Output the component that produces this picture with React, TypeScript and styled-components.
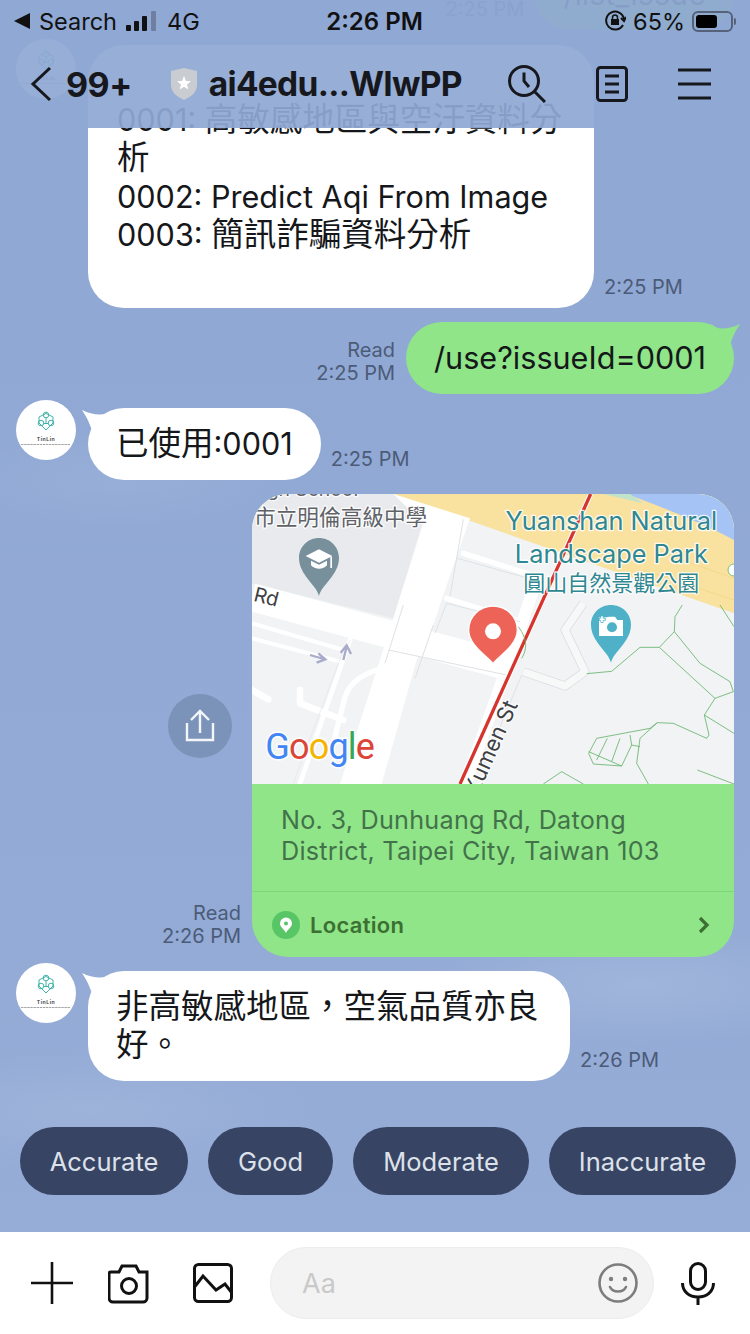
import React from "react";
import styled, { createGlobalStyle } from "styled-components";

const SANS = `Inter, "Noto Sans CJK TC", sans-serif`;

const Global = createGlobalStyle`
  html, body { margin: 0; padding: 0; }
  body { font-family: ${SANS}; background: #8fa9d5; }
`;

const Screen = styled.div`
  position: relative;
  width: 750px;
  height: 1334px;
  overflow: hidden;
  display: flex;
  flex-direction: column;
  background:
    radial-gradient(ellipse 240px 60px at 90px 1110px, rgba(190,205,232,.22), transparent 100%),
    radial-gradient(ellipse 220px 60px at 640px 985px, rgba(190,205,232,.3), transparent 100%),
    radial-gradient(ellipse 170px 50px at 120px 480px, rgba(170,190,225,.25), transparent 100%),
    linear-gradient(180deg, #8fa8d3 0%, #92aad5 60%, #96add7 100%);
`;

const TopOverlay = styled.header`
  position: absolute;
  top: 0;
  left: 0;
  right: 0;
  height: 128px;
  background: rgba(143, 168, 212, 0.93);
  z-index: 5;
  display: flex;
  flex-direction: column;
`;

const StatusBar = styled.div`
  height: 42px;
  display: grid;
  grid-template-columns: 1fr auto 1fr;
  align-items: center;
  padding: 0 15px 0 14px;
  font-size: 23.5px;
  color: #111;
`;
const StatusLeft = styled.div`
  display: flex;
  align-items: center;
  gap: 9px;
`;
const StatusRight = styled.div`
  display: flex;
  align-items: center;
  justify-content: flex-end;
  gap: 7px;
`;
const StatusTime = styled.div`
  font-weight: 600;
  font-size: 24px;
`;
const Battery = styled.div`
  width: 41px;
  height: 21px;
  border: 2px solid #56617a;
  border-radius: 6px;
  padding: 2px;
  box-sizing: border-box;
  position: relative;
  margin-right: 2px;
  &::after {
    content: "";
    position: absolute;
    right: -5px;
    top: 5px;
    width: 2px;
    height: 7px;
    background: #56617a;
    border-radius: 0 2px 2px 0;
  }
`;
const BatteryLevel = styled.div`
  height: 100%;
  background: #000;
  border-radius: 3px;
`;

const NavBar = styled.nav`
  flex: 1;
  display: flex;
  align-items: center;
  padding: 0 39px 2px 30px;
  color: #16181d;
`;
const NavCount = styled.span`
  font-size: 34px;
  font-weight: 700;
  margin-left: 14px;
  letter-spacing: -0.5px;
`;
const NavTitle = styled.span`
  font-size: 33.5px;
  font-weight: 700;
  margin-left: 11px;
  letter-spacing: -0.7px;
  flex: 1;
`;
const Shield = styled.svg`
  margin-left: 38px;
`;
const NavActions = styled.div`
  display: flex;
  align-items: center;
  gap: 50px;
`;

const Chat = styled.main`
  flex: 1;
  display: flex;
  flex-direction: column;
  gap: 14px;
  min-height: 0;
`;

const Row = styled.div<{ $mine?: boolean }>`
  display: flex;
  align-items: flex-start;
  justify-content: ${(p) => (p.$mine ? "flex-end" : "flex-start")};
  padding: ${(p) => (p.$mine ? "0 16px 0 0" : "0 0 0 16px")};
`;

const GhostRow = styled(Row)`
  margin-top: -42px;
  margin-bottom: 1px;
  align-items: flex-end;
`;

const Avatar = styled.div`
  width: 60px;
  height: 60px;
  border-radius: 50%;
  background: #fff;
  flex: none;
  margin-top: -8px;
  margin-right: 12px;
  display: flex;
  align-items: center;
  justify-content: center;
`;

const Bubble = styled.div<{ $mine?: boolean; $tall?: boolean }>`
  position: relative;
  box-sizing: border-box;
  background: ${(p) => (p.$mine ? "#8fe588" : "#fff")};
  border-radius: 36px;
  padding: ${(p) => (p.$tall ? "56px 29px 53.4px 29px" : "17px 28px 17px 28px")};
  font-size: 30.6px;
  line-height: ${(p) => (p.$tall ? "38.4px" : "38px")};
  color: #15171a;
  white-space: pre-line;
`;
const Han = styled.span`
  font-size: 32.5px;
`;

const Tail = styled.svg<{ $mine?: boolean }>`
  position: absolute;
  top: 2px;
  ${(p) => (p.$mine ? "right: -6px;" : "left: -6px;")}
`;

const Meta = styled.div<{ $mine?: boolean }>`
  align-self: flex-end;
  font-size: 20px;
  line-height: 23px;
  color: #4c5b78;
  text-align: right;
  ${(p) => (p.$mine ? "margin: 0 11px 9px 0;" : "margin: 0 0 9px 10px;")}
`;

const CardSide = styled.div`
  display: flex;
  flex-direction: column;
  align-items: flex-end;
  justify-content: space-between;
  align-self: stretch;
  padding: 200px 0 9px;
  margin-right: 11px;
`;
const ShareButton = styled.div`
  width: 64px;
  height: 64px;
  border-radius: 50%;
  background: #7c93b9;
  margin-right: 9px;
  display: flex;
  align-items: center;
  justify-content: center;
`;
const SideMeta = styled.div`
  font-size: 20px;
  line-height: 23px;
  color: #4c5b78;
  text-align: right;
`;

const Card = styled.div`
  width: 482px;
  border-radius: 36px;
  overflow: hidden;
  background: #8fe588;
`;
const MapBox = styled.svg`
  display: block;
`;
const Address = styled.div`
  height: 108px;
  box-sizing: border-box;
  padding: 21px 29px 0;
  font-size: 25.2px;
  line-height: 31px;
  letter-spacing: 0.25px;
  color: #43724a;
  border-bottom: 1px solid #7fd679;
`;
const CardFooter = styled.div`
  height: 65px;
  display: flex;
  align-items: center;
  padding: 0 24px 0 20px;
  color: #3c7032;
  font-size: 22px;
  font-weight: 600;
  letter-spacing: 0.3px;
`;
const FooterLabel = styled.span`
  flex: 1;
  margin-left: 10px;
`;

const Chips = styled.div`
  display: flex;
  gap: 20px;
  padding: 32px 0 0 20px;
`;
const Chip = styled.div<{ $w: number }>`
  width: ${(p) => p.$w}px;
  height: 68px;
  flex: none;
  border-radius: 34px;
  background: #384463;
  color: #dde2ea;
  font-size: 25.5px;
  display: flex;
  align-items: center;
  justify-content: center;
`;

const Composer = styled.footer`
  height: 102px;
  flex: none;
  background: #fff;
  display: flex;
  align-items: center;
  box-sizing: border-box;
  padding: 0 35px 0 31px;
  margin-top: 36px;
`;
const ToolGroup = styled.div`
  display: flex;
  align-items: center;
  gap: 35px;
  & > svg:last-child {
    margin-left: 8px;
  }
`;
const InputPill = styled.div`
  box-sizing: border-box;
  margin: 0 27px 0 37px;
  width: 384px;
  height: 72px;
  flex: none;
  background: #f3f3f3;
  border: 1px solid #ececec;
  border-radius: 36px;
  display: flex;
  align-items: center;
  justify-content: space-between;
  padding: 0 15px 0 31px;
`;
const Placeholder = styled.span`
  color: #c9c9c9;
  font-size: 27px;
`;

const WhiteTail = () => (
  <Tail width="34" height="40" viewBox="0 0 34 40" aria-hidden>
    <path d="M0 0 C10 5 20 6 32 2 L32 30 L12 30 C10 18 6 9 0 0Z" fill="#fff" />
  </Tail>
);
const GreenTail = () => (
  <Tail $mine width="34" height="40" viewBox="0 0 34 40" aria-hidden>
    <path d="M34 0 C24 5 14 6 2 2 L2 30 L22 30 C24 18 28 9 34 0Z" fill="#8fe588" />
  </Tail>
);

const Logo = () => (
  <svg width="60" height="60" viewBox="0 0 60 60">
    <g fill="none" stroke="#3fb3a8" strokeWidth="1">
      <path d="M30 13.500l7 3.500v6l-7 7-7-7v-6z" />
      <circle cx="30" cy="15" r="2.800" />
      <circle cx="25" cy="23" r="2.800" />
      <circle cx="35" cy="23" r="2.800" />
      <path d="M30 18v6M27.800 23.500h4.400" />
    </g>
    <text x="30" y="41" textAnchor="middle" fontSize="5.200" fontWeight="600" letterSpacing=".5" fill="#333" fontFamily="Inter, sans-serif">TinLin</text>
    <path d="M5 44.500H54" stroke="#a5a5a5" strokeWidth="1" strokeDasharray="2.500 .6" />
  </svg>
);

const LocationMap = () => {
  const halo = { paintOrder: "stroke" as const, stroke: "#fff", strokeOpacity: 0.85, strokeWidth: 8, strokeLinejoin: "round" as const };
  const f = `Inter, "Noto Sans CJK TC", sans-serif`;
  return (
    <MapBox width="482" height="290" viewBox="6 12 1446 870">
      <defs>
        <clipPath id="m"><rect x="6" y="12" width="1446" height="870" /></clipPath>
      </defs>
      <g clipPath="url(#m)">
        <rect x="6" y="12" width="1446" height="870" fill="#f1f3f4" />
        {/* school ground */}
        <path d="M6 12H430L520 90L430 385L6 280Z" fill="#e8eaed" />
        {/* park and water */}
        <path d="M430 12H1452V370Z" fill="#f9e29f" />
        <path d="M1130 12H1452V150C1340 90 1230 50 1130 12Z" fill="#a6c3f5" />
        <path d="M1060 12H1140L1180 40Z" fill="#bfe3cb" />
        <path d="M1180 240L1452 330M1240 190L1452 265" stroke="#f3d88c" strokeWidth="3" fill="none" />
        {/* main road */}
        <path d="M430 12L660 85L585 300L550 405L500 510L395 882H270L430 385L520 100Z" fill="#fff" />
        <g fill="none" stroke="#fff" strokeLinecap="round" strokeLinejoin="round">
          <path d="M6 322L780 530" strokeWidth="84" strokeLinecap="butt" />
          <path d="M640 190L830 250" strokeWidth="16" />
          <path d="M590 325L800 390" strokeWidth="16" />
          <path d="M6 400L280 480" strokeWidth="12" />
          <path d="M6 445L270 515" strokeWidth="12" />
          <path d="M300 450L150 880" strokeWidth="14" />
          <path d="M380 540C320 560 290 590 280 640L245 780" strokeWidth="16" />
          <path d="M150 600V640L280 690" strokeWidth="20" />
          <path d="M6 600L55 628" strokeWidth="20" />
          <path d="M850 300L740 620L640 900" strokeWidth="36" strokeLinecap="butt" />
        </g>
        {/* park drive */}
        <path d="M820 545L945 588L1005 545L945 420L1000 340" fill="none" stroke="#dcdee2" strokeWidth="27" strokeLinejoin="round" />
        <path d="M820 545L945 588L1005 545L945 420L1000 340" fill="none" stroke="#f7f8f8" strokeWidth="22" strokeLinejoin="round" />
        <g fill="none" stroke="#dfe1e5" strokeWidth="3">
          <path d="M640 88L600 320M622 205L825 262M555 430L590 340L810 395" />
          <path d="M460 345L405 520M550 405L495 565M415 480L770 555" />
          <path d="M815 555L700 830" />
          <path d="M300 450L265 520L130 880" opacity=".5" />
        </g>
        {/* red road */}
        <path d="M1022 12L630 882" stroke="#fff" strokeWidth="16" fill="none" />
        <path d="M1022 12L630 882" stroke="#d5352e" strokeWidth="10" fill="none" />
        {/* park paths */}
        <g fill="none" stroke="#66b36b" strokeWidth="2.500">
          <path d="M1010 551L1085 544L1170 472H1228L1273 425L1275 380L1297 345" />
          <path d="M1228 472L1395 625L1363 675L1377 735L1370 745L1270 700L1222 698L1170 745L1160 820L1195 882" />
          <path d="M1273 425L1350 520L1440 575L1450 605L1395 625" />
          <path d="M1410 345L1452 410" />
          <path d="M1363 675L1452 730" />
          <path d="M1222 698L1200 715L1040 745L1016 790L1030 822L1115 828L1145 765L1170 770" />
          <path d="M1072 745L1040 810M1110 745L1085 815M1016 785L1115 828M1140 735L1145 765" />
          <path d="M880 882L935 845L1000 882" />
          <path d="M1342 840L1452 882" />
          <path d="M805 410C835 450 830 480 815 505" />
          <circle cx="1452" cy="240" r="18" fill="#fff" />
        </g>
        {/* one-way arrows */}
        <g fill="none" stroke="#a9abcb" strokeWidth="7">
          <path d="M180 495L222 507M205 490L226 508L200 518" />
          <path d="M280 510L290 470M272 488L290 466L303 492" />
        </g>
        {/* labels */}
        <text x="50" y="18" fontFamily={f} fontSize="58" fill="#5f6368" style={halo}>gh School</text>
        <text x="12" y="105" fontFamily={f} fontSize="65" fill="#5f6368" style={halo}>市立明倫高級中學</text>
        <text x="8" y="332" fontFamily={f} fontSize="60" fill="#3c4043" transform="rotate(14 8 332)" style={halo}>Rd</text>
        <text x="1084" y="119" textAnchor="middle" fontFamily={f} fontSize="76" fill="#2f8791" style={halo}>Yuanshan Natural</text>
        <text x="1084" y="220" textAnchor="middle" fontFamily={f} fontSize="76" fill="#2f8791" style={halo}>Landscape Park</text>
        <text x="1084" y="304" textAnchor="middle" fontFamily={f} fontSize="66" fill="#2f8791" style={halo}>圓山自然景觀公園</text>
        <text x="682" y="920" fontFamily={f} fontSize="66" fill="#3c4043" transform="rotate(-66 682 920)" style={halo}>Xumen St</text>
        {/* school pin */}
        <path d="M207 318C200 285 147 255 147 204C147 170 174 144 207 144C240 144 267 170 267 204C267 255 214 285 207 318Z" fill="#78909c" />
        <path d="M207 178L167 198L207 218L247 198Z" fill="#fff" />
        <path d="M183 212V226C195 240 220 240 231 226V212L207 224Z" fill="#fff" />
        <rect x="241" y="200" width="5" height="34" fill="#fff" />
        {/* camera pin */}
        <path d="M1083 518C1076 485 1023 455 1023 404C1023 370 1050 345 1083 345C1116 345 1143 370 1143 404C1143 455 1090 485 1083 518Z" fill="#4fb1c7" />
        <path d="M1047 382H1070L1078 380H1095L1102 390H1119V438H1047Z" fill="#fff" />
        <circle cx="1086" cy="412" r="15" fill="#4fb1c7" />
        <path d="M1056 376V398M1046 388H1067" stroke="#4fb1c7" strokeWidth="9" />
        <path d="M1056 379V396M1049 388H1064" stroke="#fff" strokeWidth="5" />
        {/* red pin */}
        <path d="M729 522C722 505 656 470 656 420C656 380 689 348 729 348C769 348 802 380 802 420C802 470 736 505 729 522Z" fill="#ee6358" stroke="#fff" strokeWidth="4" />
        <circle cx="729" cy="424" r="24" fill="#fff" />
        {/* google */}
        <text x="46" y="808" fontFamily="Roboto, sans-serif" fontSize="108" fontWeight="400" letterSpacing="-2.5" style={{ paintOrder: "stroke", stroke: "#fff", strokeWidth: 10, strokeOpacity: 0.8 }}>
          <tspan fill="#4285f4">G</tspan>
          <tspan fill="#db4437">o</tspan>
          <tspan fill="#f4b400">o</tspan>
          <tspan fill="#4285f4">g</tspan>
          <tspan fill="#34a853">l</tspan>
          <tspan fill="#db4437">e</tspan>
        </text>
      </g>
    </MapBox>
  );
};

export default function App() {
  return (
    <>
      <Global />
      <Screen>
        <Chat>
          <GhostRow $mine>
            <Meta $mine>2:25 PM</Meta>
            <Bubble $mine>/list_issue</Bubble>
          </GhostRow>

          <Row>
            <Avatar style={{ marginTop: -6 }}><Logo /></Avatar>
            <Bubble $tall style={{ width: 506 }}>
              0001: <Han>高敏感地區與空汙資料分</Han>{"\n"}
              <Han>析</Han>{"\n"}
              0002: Predict Aqi From Image{"\n"}
              0003: <Han>簡訊詐騙資料分析</Han>
            </Bubble>
            <Meta>2:25 PM</Meta>
          </Row>

          <Row $mine>
            <Meta $mine>Read<br />2:25 PM</Meta>
            <Bubble $mine><GreenTail />/use?issueId=0001</Bubble>
          </Row>

          <Row>
            <Avatar><Logo /></Avatar>
            <Bubble><WhiteTail /><Han>已使用</Han>:0001</Bubble>
            <Meta>2:25 PM</Meta>
          </Row>

          <Row $mine>
            <CardSide>
              <ShareButton>
                <svg width="32" height="34" viewBox="0 0 32 34" fill="none" stroke="#f2f5fa" strokeWidth="2.400">
                  <path d="M16 24V3M7 11l9-9 9 9" />
                  <path d="M4 14v17h26V14" transform="translate(-1 0)" />
                </svg>
              </ShareButton>
              <SideMeta>Read<br />2:26 PM</SideMeta>
            </CardSide>
            <Card>
              <LocationMap />
              <Address>No. 3, Dunhuang Rd, Datong<br />District, Taipei City, Taiwan 103</Address>
              <CardFooter>
                <svg width="28" height="28" viewBox="0 0 28 28">
                  <circle cx="14" cy="14" r="14" fill="#58c567" />
                  <path d="M14 22C12 18 8 16 8 12.500a6 6 0 0 1 12 0C20 16 16 18 14 22Z" fill="#fff" />
                  <circle cx="14" cy="12.500" r="2" fill="#58c567" />
                </svg>
                <FooterLabel>Location</FooterLabel>
                <svg width="12" height="18" viewBox="0 0 12 18" fill="none" stroke="#3c7032" strokeWidth="3.200">
                  <path d="M2 2l7 7-7 7" />
                </svg>
              </CardFooter>
            </Card>
          </Row>

          <Row>
            <Avatar><Logo /></Avatar>
            <Bubble style={{ width: 482 }}><WhiteTail /><Han>{"非高敏感地區，空氣品質亦良\n好。"}</Han></Bubble>
            <Meta>2:26 PM</Meta>
          </Row>

          <Chips>
            <Chip $w={168}>Accurate</Chip>
            <Chip $w={125}>Good</Chip>
            <Chip $w={176}>Moderate</Chip>
            <Chip $w={187}>Inaccurate</Chip>
          </Chips>
        </Chat>

        <Composer>
          <ToolGroup>
            <svg width="42" height="42" viewBox="0 0 42 42" stroke="#111" strokeWidth="2.600">
              <path d="M21 0v42M0 21h42" />
            </svg>
            <svg width="42" height="41" viewBox="0 0 42 41" fill="none" stroke="#111" strokeWidth="3">
              <path d="M3 9h8l3-6h14l3 6h8v26a4 4 0 0 1-4 4H5a4 4 0 0 1-4-4V11a2 2 0 0 1 2-2Z" />
              <circle cx="21" cy="23" r="7.500" />
            </svg>
            <svg width="40" height="40" viewBox="0 0 40 40" fill="none" stroke="#111" strokeWidth="3">
              <rect x="1.500" y="1.500" width="37" height="37" rx="4" />
              <path d="M1.500 24L10 13l13 14 9-6 7 9" />
            </svg>
          </ToolGroup>
          <InputPill>
            <Placeholder>Aa</Placeholder>
            <svg width="40" height="40" viewBox="0 0 40 40" fill="none" stroke="#7d7d7d" strokeWidth="2.600">
              <circle cx="20" cy="20" r="18.500" />
              <circle cx="13" cy="16" r="2.200" fill="#7d7d7d" stroke="none" />
              <circle cx="27" cy="16" r="2.200" fill="#7d7d7d" stroke="none" />
              <path d="M12 24c3 6 13 6 16 0" strokeLinecap="round" />
            </svg>
          </InputPill>
          <svg width="34" height="43" viewBox="0 0 34 43" fill="none" stroke="#111" strokeWidth="3">
            <rect x="9.500" y="1.500" width="15" height="26" rx="7.500" />
            <path d="M1.500 21c0 9 7 14 15.500 14s15.500-5 15.500-14M17 35v8" />
          </svg>
        </Composer>

        <TopOverlay>
          <StatusBar>
            <StatusLeft>
              <svg width="16" height="16" viewBox="0 0 16 16"><path d="M16 0v16L0 8Z" fill="#111" /></svg>
              <span>Search</span>
              <svg width="32" height="20" viewBox="0 0 32 20">
                <rect x="0" y="14" width="5" height="6" rx="1" fill="#111" />
                <rect x="8" y="10" width="5" height="10" rx="1" fill="#111" />
                <rect x="16" y="5" width="5" height="15" rx="1" fill="#111" />
                <rect x="25" y="0" width="5" height="20" rx="1" fill="#6f7f9f" />
              </svg>
              <span>4G</span>
            </StatusLeft>
            <StatusTime>2:26 PM</StatusTime>
            <StatusRight>
              <svg width="22" height="22" viewBox="0 0 22 22" fill="none" stroke="#111" strokeWidth="2">
                <path d="M19 15A9 9 0 1 1 20 9" />
                <path d="M17 8l3 3 2-4" />
                <rect x="7" y="9" width="8" height="6" fill="#111" stroke="none" />
                <path d="M8.500 9V7.500a2.500 2.500 0 0 1 5 0V9" strokeWidth="1.500" />
              </svg>
              <span>65%</span>
              <Battery><BatteryLevel style={{ width: "65%" }} /></Battery>
            </StatusRight>
          </StatusBar>
          <NavBar>
            <svg width="22" height="36" viewBox="0 0 22 36" fill="none" stroke="#16181d" strokeWidth="3">
              <path d="M20 2L3 18l17 16" />
            </svg>
            <NavCount>99+</NavCount>
            <Shield width="28" height="32" viewBox="0 0 28 32">
              <path d="M14 0l13 3v14c0 8-7 12-13 15C8 29 1 25 1 17V3Z" fill="#c9ccd1" />
              <path d="M14 8l2 5 5 .3-4 3.200 1.300 5-4.300-2.800L9.700 21.500 11 16.500 7 13.300l5-.3Z" fill="#fff" />
            </Shield>
            <NavTitle>ai4edu...WIwPP</NavTitle>
            <NavActions>
              <svg width="38" height="38" viewBox="0 0 38 38" fill="none" stroke="#16181d" strokeWidth="3">
                <circle cx="16" cy="16" r="14.500" />
                <path d="M26.500 26.500L37 37M16 7.500v8.500l5 6" />
              </svg>
              <svg width="32" height="36" viewBox="0 0 32 36" fill="none" stroke="#16181d" strokeWidth="3">
                <rect x="1.500" y="1.500" width="29" height="33" rx="3" />
                <path d="M9 10h14M9 18h14M9 26h14" />
              </svg>
              <svg width="33" height="32" viewBox="0 0 33 32" stroke="#16181d" strokeWidth="3">
                <path d="M0 2h33M0 16h33M0 30h33" />
              </svg>
            </NavActions>
          </NavBar>
        </TopOverlay>
      </Screen>
    </>
  );
}
